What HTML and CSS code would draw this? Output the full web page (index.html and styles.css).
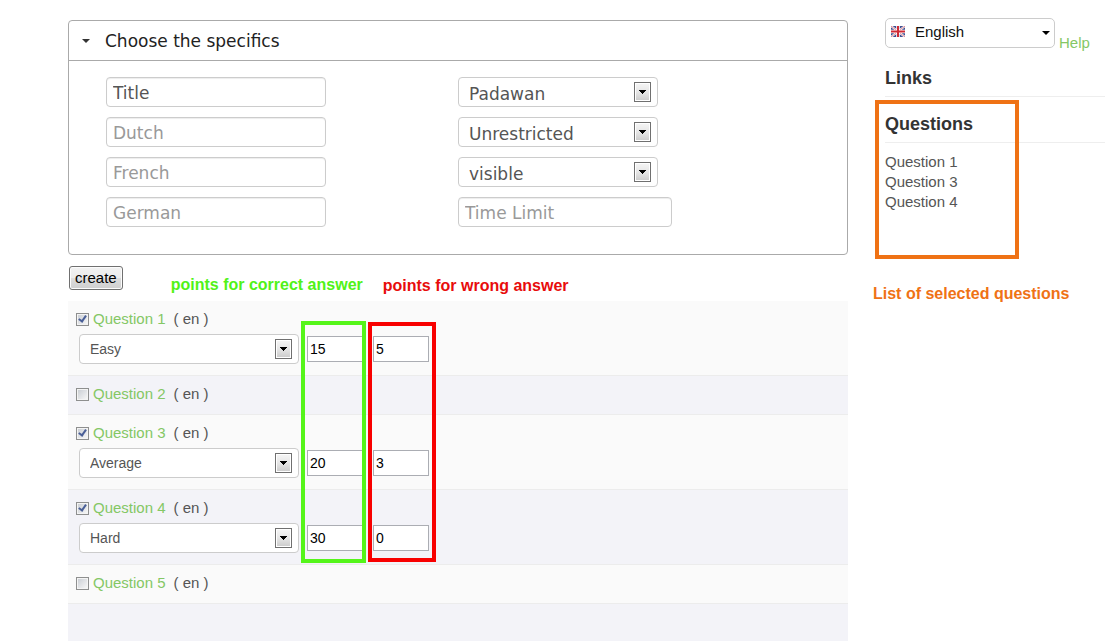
FILE: index.html
```html
<!DOCTYPE html>
<html lang="en">
<head>
<meta charset="utf-8">
<title>Create questionnaire</title>
<link rel="stylesheet" href="styles.css">
</head>
<body>
<svg class="sprite" aria-hidden="true">
  <defs>
    <linearGradient id="face" x1="0" y1="0" x2="0" y2="1">
      <stop offset="0" stop-color="#f4f4f4"/><stop offset=".5" stop-color="#e6e6e6"/><stop offset="1" stop-color="#cdcdcd"/>
    </linearGradient>
  </defs>
  <symbol id="drop" viewBox="0 0 17 20">
    <rect x=".5" y=".5" width="16" height="19" fill="#fff" stroke="#707070"/>
    <rect x="2" y="2" width="13" height="16" fill="url(#face)"/>
    <path d="M5 8h7v1h-1v1h-1v1h-1v1h-1v-1h-1v-1h-1v-1h-1z" fill="#000"/>
  </symbol>
</svg>
<div class="page">
  <main>
    <section class="panel">
      <h1 class="panel-head">
        <svg class="caret" viewBox="0 0 8 4" aria-hidden="true"><path d="M0 0h8L4 4z" fill="#333"/></svg>
        Choose the specifics
      </h1>
      <div class="fields">
        <div class="column titles">
          <input class="field filled" type="text" placeholder="Title" aria-label="Title">
          <input class="field" type="text" placeholder="Dutch" aria-label="Dutch">
          <input class="field" type="text" placeholder="French" aria-label="French">
          <input class="field" type="text" placeholder="German" aria-label="German">
        </div>
        <div class="column">
          <div class="select medium"><select aria-label="Level"><option>Padawan</option></select><svg class="drop" aria-hidden="true"><use href="#drop"/></svg></div>
          <div class="select medium"><select aria-label="Access"><option>Unrestricted</option></select><svg class="drop" aria-hidden="true"><use href="#drop"/></svg></div>
          <div class="select medium"><select aria-label="Visibility"><option>visible</option></select><svg class="drop" aria-hidden="true"><use href="#drop"/></svg></div>
          <input class="field limit" type="text" placeholder="Time Limit" aria-label="Time Limit">
        </div>
      </div>
    </section>

    <div class="toolbar">
      <button class="create" type="button">create</button>
      <strong class="note correct">points for correct answer</strong>
      <strong class="note wrong">points for wrong answer</strong>
    </div>

    <div class="list-wrap">
      <ul class="list">
        <li class="row">
          <div class="name"><input type="checkbox" class="tick" aria-labelledby="q1" checked><a id="q1" href="#">Question 1</a><span>( en )</span></div>
          <div class="settings">
            <div class="select"><select aria-label="Difficulty of question 1"><option>Easy</option></select><svg class="drop" aria-hidden="true"><use href="#drop"/></svg></div>
            <input class="points" type="text" value="15" aria-label="Points for correct answer"><input class="points" type="text" value="5" aria-label="Points for wrong answer">
          </div>
        </li>
        <li class="row">
          <div class="name"><input type="checkbox" class="tick" aria-labelledby="q2"><a id="q2" href="#">Question 2</a><span>( en )</span></div>
        </li>
        <li class="row">
          <div class="name"><input type="checkbox" class="tick" aria-labelledby="q3" checked><a id="q3" href="#">Question 3</a><span>( en )</span></div>
          <div class="settings">
            <div class="select"><select aria-label="Difficulty of question 3"><option>Average</option></select><svg class="drop" aria-hidden="true"><use href="#drop"/></svg></div>
            <input class="points" type="text" value="20" aria-label="Points for correct answer"><input class="points" type="text" value="3" aria-label="Points for wrong answer">
          </div>
        </li>
        <li class="row">
          <div class="name"><input type="checkbox" class="tick" aria-labelledby="q4" checked><a id="q4" href="#">Question 4</a><span>( en )</span></div>
          <div class="settings">
            <div class="select"><select aria-label="Difficulty of question 4"><option>Hard</option></select><svg class="drop" aria-hidden="true"><use href="#drop"/></svg></div>
            <input class="points" type="text" value="30" aria-label="Points for correct answer"><input class="points" type="text" value="0" aria-label="Points for wrong answer">
          </div>
        </li>
        <li class="row">
          <div class="name"><input type="checkbox" class="tick" aria-labelledby="q5"><a id="q5" href="#">Question 5</a><span>( en )</span></div>
        </li>
        <li class="row rest"></li>
      </ul>
      <div class="frame frame-correct"></div>
      <div class="frame frame-wrong"></div>
    </div>
  </main>

  <aside class="side">
    <div class="language">
      <div class="lang-box">
        <select aria-label="Language"><option>English</option></select>
        <svg class="flag" viewBox="0 0 14 11" aria-hidden="true">
          <rect width="14" height="11" fill="#3f4f90"/>
          <path d="M0 0L14 11M14 0L0 11" stroke="#fff" stroke-width="2"/>
          <path d="M0 0L14 11M14 0L0 11" stroke="#d8616a" stroke-width=".8"/>
          <path d="M7 0v11M0 5.5h14" stroke="#fff" stroke-width="3.6"/>
          <path d="M7 0v11M0 5.5h14" stroke="#d02a35" stroke-width="2"/>
        </svg>
        <svg class="lang-arrow" viewBox="0 0 8 4" aria-hidden="true"><path d="M0 0h8L4 4z" fill="#000"/></svg>
      </div>
      <a class="help" href="#">Help</a>
    </div>
    <h2>Links</h2>
    <section class="selected">
      <h2>Questions</h2>
      <ul>
        <li>Question 1</li>
        <li>Question 3</li>
        <li>Question 4</li>
      </ul>
      <div class="frame frame-selected"></div>
    </section>
    <strong class="note chosen">List of selected questions</strong>
  </aside>
</div>
</body>
</html>
```
FILE: styles.css
```css
* { box-sizing: border-box; }
body {
  margin: 0;
  background: #fff;
  color: #555;
  font: 15px/20px "Liberation Sans", Arial, sans-serif;
}
ul { list-style: none; margin: 0; padding: 0; }
a { color: #84c765; text-decoration: none; }
input, select, button { font: inherit; margin: 0; }
.sprite { position: absolute; width: 0; height: 0; }

.page {
  display: grid;
  grid-template-columns: minmax(0, 1fr) 220px;
  column-gap: 37px;
  min-height: 100vh;
  padding: 0 3px 0 68px;
}
main { display: flex; flex-direction: column; padding-top: 20px; }

.panel {
  border: 1px solid #aaa;
  border-radius: 4px;
  font-family: "DejaVu Sans", Verdana, sans-serif;
  font-size: 17px;
}
.panel-head {
  display: flex;
  align-items: center;
  gap: 15px;
  margin: 0;
  padding: 1px 13px 0;
  border-bottom: 1px solid #aaa;
  color: #222;
  font-size: 17px;
  font-weight: normal;
  line-height: 38px;
}
.caret { width: 8px; height: 4px; }
.fields {
  display: grid;
  grid-template-columns: 1fr 1fr;
  padding: 16px 0 27px;
}
.column { display: flex; flex-direction: column; gap: 10px; }
.titles { padding-left: 37px; }
.field {
  width: 220px;
  height: 30px;
  padding: 1px 6px 0;
  border: 1px solid #ccc;
  border-radius: 4px;
  background: #fff;
  box-shadow: inset 0 1px 1px rgba(0, 0, 0, .075);
  color: #555;
}
.field::placeholder { color: #999; opacity: 1; }
.filled::placeholder { color: #555; }
.limit { width: 214px; }

.select { position: relative; width: 220px; }
.medium { width: 200px; }
.select select {
  display: block;
  width: 100%;
  height: 30px;
  padding: 0 30px 0 10px;
  border: 1px solid #ccc;
  border-radius: 4px;
  background: #fff;
  color: #555;
  appearance: none;
}
.medium select { padding-top: 3px; }
.drop {
  position: absolute;
  top: 5px;
  right: 7px;
  width: 17px;
  height: 20px;
  pointer-events: none;
}

.toolbar {
  display: flex;
  align-items: flex-start;
  height: 46px;
  padding: 11px 1px 0;
}
.create {
  height: 24px;
  padding: 0 5px;
  border: 1px solid #707070;
  border-radius: 3px;
  background: linear-gradient(#f2f2f2, #ebebeb 50%, #dddddd 50%, #cfcfcf);
  box-shadow: inset 0 0 0 1px #fcfcfc;
  color: #000;
}
.note { font-size: 16px; white-space: nowrap; }
.correct { margin: 9px 0 0 48px; color: #51f218; }
.wrong { margin: 10px 0 0 20px; color: #e80c0c; }

.list-wrap { position: relative; display: flex; flex: 1; }
.list { display: flex; flex: 1; flex-direction: column; }
.row {
  padding: 8px 8px 10px;
  border-bottom: 1px solid #ececec;
  background: #fafafa;
}
.row:nth-child(even) { background: #f3f3f8; }
.rest { flex: 1; border-bottom: 0; }
.name { display: flex; align-items: center; }
.name a { margin: 0 8px 0 4px; }
.tick {
  position: relative;
  width: 13px;
  height: 13px;
  padding: 1px;
  border: 1px solid #8e8f8f;
  background: linear-gradient(135deg, #cbcfd5, #f6f6f6) content-box, #f4f4f4;
  appearance: none;
}
.tick:checked::after {
  content: "";
  position: absolute;
  top: 0;
  left: 3px;
  width: 3px;
  height: 6px;
  border: solid #4a5f97;
  border-width: 0 2px 2px 0;
  transform: rotate(35deg);
}
.settings {
  display: flex;
  align-items: center;
  margin: 5px 0 1px 3px;
  font-size: 14px;
}
.settings .select { margin-right: 8px; }
.points {
  width: 56px;
  height: 26px;
  margin-right: 10px;
  padding: 0 2px;
  border: 1px solid #abadb3;
  background: #fff;
  color: #000;
}

.frame { position: absolute; border: 4px solid; pointer-events: none; }
.frame-correct { top: 20px; left: 233px; width: 65px; height: 242px; border-color: #55f51a; }
.frame-wrong { top: 21px; left: 300px; width: 68px; height: 240px; border-color: #f80000; }
.frame-selected { top: 3px; left: -10px; width: 144px; height: 159px; border-color: #ef7215; }

.side { padding-top: 18px; }
.language { display: flex; gap: 4px; margin-bottom: 8px; }
.lang-box { position: relative; width: 170px; }
.lang-box select {
  display: block;
  width: 100%;
  height: 30px;
  padding: 0 20px 2px 29px;
  border: 1px solid #ccc;
  border-radius: 5px;
  background: #fff;
  color: #111;
  appearance: none;
}
.flag { position: absolute; top: 8px; left: 6px; width: 14px; height: 11px; }
.lang-arrow { position: absolute; top: 13px; right: 5px; width: 8px; height: 4px; }
.help { margin-top: 15px; }
.side h2 {
  margin: 0;
  padding: 7px 0 8px;
  border-bottom: 1px solid #eee;
  color: #333;
  font-size: 18px;
  line-height: 20px;
}
.selected { position: relative; }
.side .selected h2 { padding: 17px 0 8px; }
.selected ul { padding-top: 9px; }
.chosen { display: block; margin: 72px 0 0 -12px; color: #ef7215; }
```
